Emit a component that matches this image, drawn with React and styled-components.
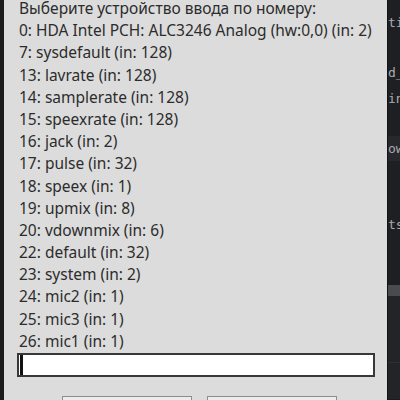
import React from "react";
import styled, { createGlobalStyle } from "styled-components";

const GlobalStyle = createGlobalStyle`
  html, body {
    margin: 0;
    padding: 0;
    background: #1e1f22;
  }
  #root {
    width: 400px;
    height: 400px;
    overflow: hidden;
  }
`;

const Screen = styled.div`
  display: flex;
  width: 400px;
  height: 400px;
  overflow: hidden;
`;

const LeftEdge = styled.div`
  width: 4px;
  flex-shrink: 0;
  background: #1b1b1c;
`;

const Dialog = styled.div`
  width: 383px;
  flex-shrink: 0;
  background: #dcdcdc;
  display: flex;
  flex-direction: column;
  padding: 0 0 0 13px;
  box-sizing: border-box;
  font-family: "Noto Sans", "Open Sans", sans-serif;
  font-size: 15.5px;
  color: #2c2c2c;
`;

const Lines = styled.div`
  display: flex;
  flex-direction: column;
  margin-top: -3px;
  padding-left: 2px;
`;

const Line = styled.div`
  height: 22.2px;
  line-height: 22.2px;
  white-space: nowrap;
`;

const InputBox = styled.div`
  display: flex;
  align-items: center;
  width: 358px;
  height: 28px;
  box-sizing: border-box;
  margin-top: 1px;
  background: #ffffff;
  border: 2px solid #383838;
  padding-left: 1px;
`;

const Caret = styled.span`
  width: 3px;
  height: 20px;
  background: #111;
`;

const Buttons = styled.div`
  display: flex;
  gap: 15px;
  margin-top: 19px;
  padding-left: 45px;
`;

const Button = styled.div`
  width: 130px;
  height: 26px;
  box-sizing: border-box;
  border: 1px solid #8e8e8e;
  background: #ececec;
  flex-shrink: 0;
`;

const Editor = styled.div`
  flex: 1;
  display: flex;
  flex-direction: column;
  border-left: 1px solid #121314;
  background: #1e1f22;
  overflow: hidden;
`;

const Code = styled.div`
  height: 285px;
  flex-shrink: 0;
  padding-top: 10px;
  box-sizing: border-box;
  font-family: "DejaVu Sans Mono", monospace;
  font-size: 13px;
  color: #a9abb0;
`;

const CodeLine = styled.div`
  height: 25.2px;
  line-height: 25.2px;
  white-space: nowrap;
  background: ${(p) => (p.$current ? "#26282c" : "transparent")};
`;

const Splitter = styled.div`
  height: 11px;
  flex-shrink: 0;
  background: #4a4b4e;
`;

const Terminal = styled.div`
  flex: 1;
  background: #232427;
  border-bottom: 1px solid #1a1b1d;
  display: flex;
  flex-direction: column;
`;

const TermRule = styled.div`
  margin-top: 66px;
  height: 1px;
  background: #2e2f33;
`;

const devices = [
  "Выберите устройство ввода по номеру:",
  "0: HDA Intel PCH: ALC3246 Analog (hw:0,0) (in: 2)",
  "7: sysdefault (in: 128)",
  "13: lavrate (in: 128)",
  "14: samplerate (in: 128)",
  "15: speexrate (in: 128)",
  "16: jack (in: 2)",
  "17: pulse (in: 32)",
  "18: speex (in: 1)",
  "19: upmix (in: 8)",
  "20: vdownmix (in: 6)",
  "22: default (in: 32)",
  "23: system (in: 2)",
  "24: mic2 (in: 1)",
  "25: mic3 (in: 1)",
  "26: mic1 (in: 1)",
];

const code = ["ti", "", "d_", "in", "", "ow", "", "", "ts", "", ""];

export default function App() {
  return (
    <>
      <GlobalStyle />
      <Screen>
        <LeftEdge />
        <Dialog>
          <Lines>
            {devices.map((d, i) => (
              <Line key={i}>{d}</Line>
            ))}
          </Lines>
          <InputBox>
            <Caret />
          </InputBox>
          <Buttons>
            <Button />
            <Button />
          </Buttons>
        </Dialog>
        <Editor>
          <Code>
            {code.map((c, i) => (
              <CodeLine key={i} $current={i === 5}>
                {c || "\u00a0"}
              </CodeLine>
            ))}
          </Code>
          <Splitter />
          <Terminal>
            <TermRule />
          </Terminal>
        </Editor>
      </Screen>
    </>
  );
}
